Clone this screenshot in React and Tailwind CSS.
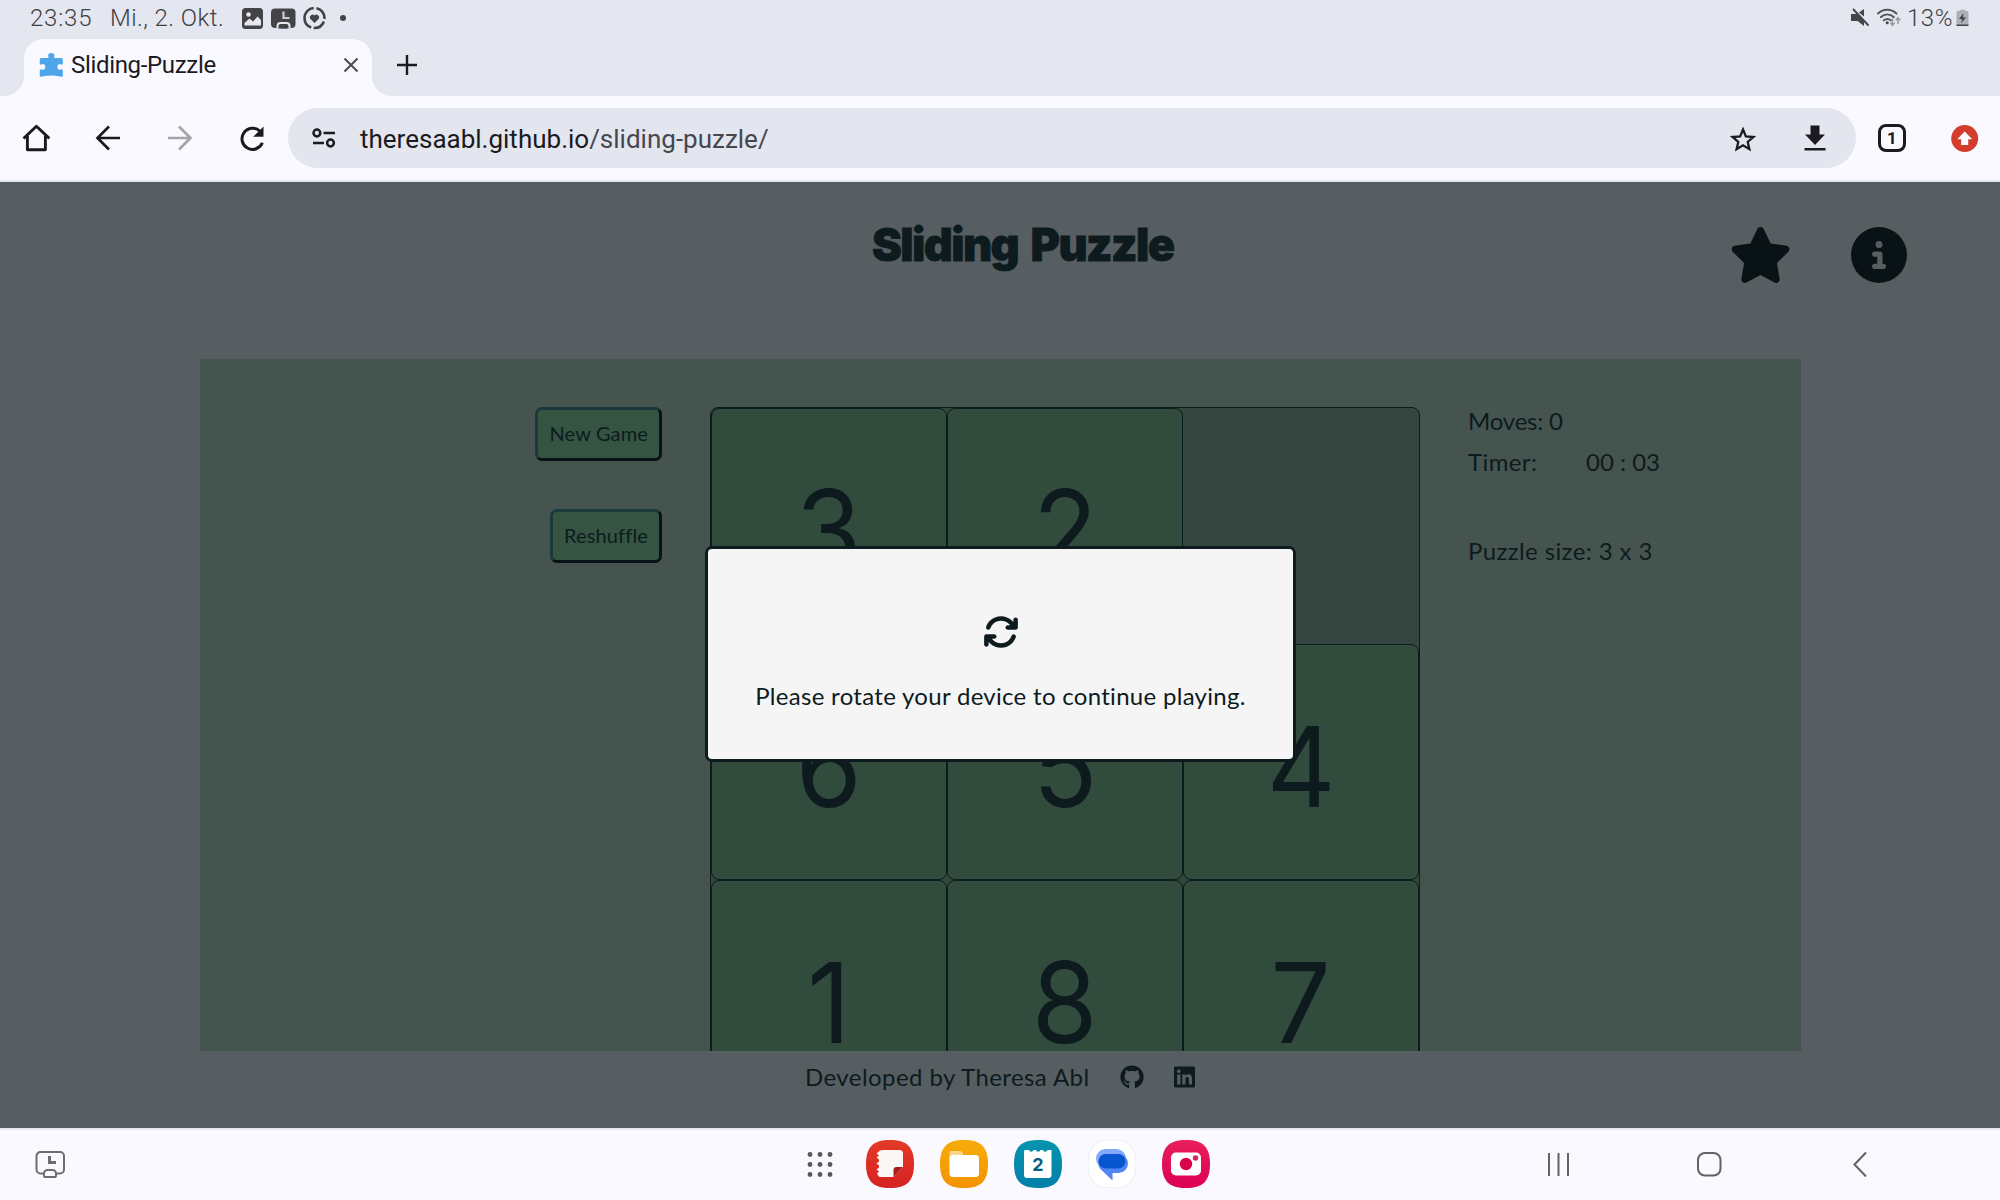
import { FaStar, FaCircleInfo, FaArrowsRotate, FaGithub, FaLinkedin } from "react-icons/fa6";

function StatusBar() {
  return (
    <div className="flex h-9 items-center pl-[30px] pr-[31px] text-[24px] leading-9 font-light text-[#3f3f42]">
      <span className="w-[80px] tracking-[0.8px]">23:35</span>
      <span className="w-[132px] whitespace-nowrap tracking-[0.45px]">Mi., 2. Okt.</span>
      <svg width="108" height="24" viewBox="242 6 108 24" fill="#444447">
        <rect x="242" y="8" width="21" height="21" rx="3.5" />
        <circle cx="248.500" cy="14.500" r="2.300" fill="#e4e7f0" />
        <path d="M244.500 25.500v-2.500l5-4.500 3.500 3 4.500-5 3.500 3.500v5.500z" fill="#e4e7f0" />
        <rect x="271" y="8.500" width="24.500" height="19.500" rx="4" />
        <path d="M283.500 11.500v6.500h6" fill="none" stroke="#c9ccd4" strokeWidth="2.200" />
        <path d="M277.500 28.500v-2.500a3 3 0 0 1 3-3h6a3 3 0 0 1 3 3v2.500" fill="#444447" stroke="#e4e7f0" strokeWidth="2" />
        <rect x="280" y="25" width="7.500" height="3.500" rx="1.500" />
        <circle cx="314.500" cy="18" r="10" fill="none" stroke="#444447" strokeWidth="2.600" strokeDasharray="15 2.500 13 2.500 27 2.830" strokeDashoffset="14" />
        <path d="M314.500 23l-4.300-4.300a2.700 2.700 0 0 1 4.300-3.200 2.700 2.700 0 0 1 4.300 3.200z" />
        <circle cx="343" cy="18" r="3" />
      </svg>
      <div className="ml-auto flex items-center">
        <svg width="56" height="24" viewBox="1850 6 56 24" fill="#454548">
          <path d="M1852 14h4.500l1.500-1.300 7 7v6.300l-6.500-5H1852z" />
          <path d="M1860 12.500l5-3.500v7.500z" />
          <path d="M1854.500 9.500l14.500 15.500" stroke="#454548" strokeWidth="1.900" strokeLinecap="round" />
          <g fill="none" stroke="#555558" strokeWidth="2" strokeLinecap="round">
            <path d="M1879 13.500c5.500-5 13-5 18.500 0" />
            <path d="M1881.800 17c4-3.500 9-3.500 13 0" />
            <path d="M1884.800 20.300c2.300-1.700 4.800-1.700 7 0" />
          </g>
          <circle cx="1888.200" cy="22.800" r="1.500" />
          <path d="M1893.500 18v7m-2.200-2.200 2.200 2.500 2.200-2.500M1899 24v-6m-2.200 2.200 2.200-2.500 2.200 2.500" fill="none" stroke="#9a9ba1" strokeWidth="1.500" />
        </svg>
        <span className="ml-[2px] w-[49px] tracking-[0.5px]">13%</span>
        <svg width="13" height="18" viewBox="0 0 13 18">
          <path d="M3.500 2V0.800h6V2h2q1 0 1 1v13h-12V3q0-1 1-1z" fill="#aeb0b8" />
          <path d="M0.500 15.500h12v1.500h-12z" fill="#444447" />
          <path d="M7.500 4 3 10h3l-.8 4L10 8.500H7z" fill="#444447" />
        </svg>
      </div>
    </div>
  );
}

function TabStrip() {
  return (
    <div className="flex h-[60px] items-end">
      <svg className="h-5 w-6" viewBox="0 0 24 20">
        <path d="M4 20a20 20 0 0 0 20-20v20z" fill="#faf9ff" />
      </svg>
      <div className="flex h-[57px] w-[348px] rounded-t-[20px] bg-[#faf9ff] pl-[15px]">
        <svg className="mt-[13px] h-[26px] w-[25px]" viewBox="0 0 25 26">
          <path
            d="M0.800 7.500Q0.800 6 2.300 6H9.300Q9.800 5 9.200 3.800Q9 1 12.300 1Q15.600 1 15.400 3.800Q14.800 5 15.300 6H22.300Q23.800 6 23.800 7.500V12.300Q23 13 21.500 12.200Q18.500 11.600 18.300 15Q18.500 18.200 21.500 17.700Q23 17 23.800 17.800V24.800Q18 24 16.500 23.800Q12.300 23.300 8 23.800Q5 24.400 0.800 24.800V17.800Q1.600 17 3.100 17.700Q6.100 18.200 6.300 15Q6.100 11.600 3.100 12.200Q1.600 13 0.800 12.300Z"
            fill="#4ea5e9"
          />
        </svg>
        <span className="ml-[7px] text-[24px] leading-[52px] tracking-[-0.33px] text-[#1b1b1f]">Sliding-Puzzle</span>
        <svg className="mr-[13px] mt-[18px] ml-auto h-4 w-4" viewBox="0 0 16 16">
          <path d="M1.500 1.500l13 13M14.500 1.500l-13 13" stroke="#4a4a50" strokeWidth="2" />
        </svg>
      </div>
      <svg className="h-5 w-6" viewBox="0 0 24 20">
        <path d="M20 20A20 20 0 0 1 0 0v20z" fill="#faf9ff" />
      </svg>
      <svg className="mb-[21px] ml-px h-5 w-5" viewBox="0 0 20 20">
        <path d="M10 0v20M0 10h20" stroke="#1b1b1f" strokeWidth="2.400" />
      </svg>
    </div>
  );
}

function Toolbar() {
  return (
    <div className="flex h-[84px] items-center bg-[#faf9ff]">
      <svg className="ml-[22px] h-7 w-7" viewBox="0 0 28 28" fill="none" stroke="#1b1b1f" strokeWidth="2.900">
        <path d="M1.500 14.500 14.400 2.300l13 12.200" strokeLinejoin="round" />
        <path d="M5.400 11.500v14.300h18V11.500" strokeLinejoin="round" />
      </svg>
      <svg className="ml-[45px] h-[26px] w-[26px]" viewBox="0 0 26 26" fill="none" stroke="#1b1b1f" strokeWidth="2.700">
        <path d="M25 13H3M14 1.500 2.500 13 14 24.500" />
      </svg>
      <svg className="ml-[46px] h-[26px] w-[26px]" viewBox="0 0 26 26" fill="none" stroke="#a3a3a9" strokeWidth="2.700">
        <path d="M1 13h22M12 1.500 23.500 13 12 24.500" />
      </svg>
      <svg className="ml-[46px] h-[26px] w-[26px]" viewBox="0 0 26 26">
        <path d="M23.400 17.800A10.600 10.600 0 1 1 20.800 6" fill="none" stroke="#1b1b1f" strokeWidth="3" />
        <path d="M24.500 1.500v10.300H14.200z" fill="#1b1b1f" />
      </svg>
      <div className="ml-[23px] flex h-[60px] w-[1568px] items-center rounded-full bg-[#e3e6ef] pl-[24px] pr-[30px]">
        <svg className="h-5 w-6" viewBox="0 0 24 20" fill="none" stroke="#1b1b1f" strokeWidth="2.500">
          <circle cx="4.900" cy="5" r="3.400" />
          <circle cx="18.500" cy="15" r="3.400" />
          <path d="M11.500 5H23M1 15h11" />
        </svg>
        <span className="ml-[24px] pt-[2px] text-[26px] text-[#1b1b1f]">
          theresaabl.github.io<span className="text-[#46474f]">/sliding-puzzle/</span>
        </span>
        <svg className="mt-[2px] ml-auto h-[26px] w-[26px]" viewBox="0 0 26 26">
          <path d="M13 3.500l2.900 6.900 7.500.6-5.700 4.900 1.700 7.300-6.400-3.900-6.400 3.900 1.700-7.300L2.600 11l7.500-.6z" fill="none" stroke="#1b1b1f" strokeWidth="2.300" />
        </svg>
        <svg className="ml-[48px] h-[26px] w-[22px]" viewBox="0 0 22 26" fill="#1b1b1f">
          <path d="M6.500 0.500h9v9H21L11 20 1 9.500h5.500zM.5 23h21v2.600H.5z" />
        </svg>
      </div>
      <div className="ml-[22px] flex h-7 w-7 items-center justify-center rounded-[8px] border-[3px] border-[#1b1b1f] text-[17px] leading-none font-bold text-[#1b1b1f]">
        1
      </div>
      <svg className="ml-[45px] h-7 w-7" viewBox="0 0 28 28">
        <circle cx="13.700" cy="14.500" r="13.500" fill="#d23d2d" />
        <path d="M13.700 7.500 21.200 15.200h-4V21h-7v-5.800h-4z" fill="#fff" />
      </svg>
    </div>
  );
}

function Header() {
  return (
    <header className="flex h-[177px] items-start pl-[872px] pr-[93px]">
      <h1 className="mt-[35px] font-[Inter] text-[45px] leading-[56px] font-black tracking-[-1.6px] whitespace-nowrap text-[#0d1b1e] [word-spacing:5px] [-webkit-text-stroke:0.8px_#0d1b1e]">
        Sliding Puzzle
      </h1>
      <FaStar className="mt-[45px] ml-auto h-14 w-[63px] text-[#091214]" />
      <FaCircleInfo className="mt-[45px] ml-[59px] h-14 w-14 text-[#091214]" />
    </header>
  );
}

function GameButton({ children }) {
  return (
    <button className="h-[54px] rounded-[7px] border-3 border-t-[#1b383c] border-r-[#091214] border-b-[#091214] border-l-[#1b383c] bg-[#355441] px-[11px] pb-[2px] text-[20px] tracking-[0.15px] text-[#0d1b1e]">
      {children}
    </button>
  );
}

const tiles = ["3", "2", null, "6", "5", "4", "1", "8", "7"];

function Board() {
  return (
    <div className="ml-12 grid h-[710px] w-[710px] shrink-0 grid-cols-3 grid-rows-3 rounded-[8px] border border-[#0d1b1e] bg-[#34463f]">
      {tiles.map((n, i) =>
        n ? (
          <div key={i} className="flex items-center justify-center rounded-[8px] border border-[#0d1b1e] bg-[#314c3d] pt-[7px] font-[Inter] text-[112px] leading-none text-[#0d1b1e]">
            <span className="scale-x-[0.95]">{n}</span>
          </div>
        ) : (
          <div key={i} />
        ),
      )}
    </div>
  );
}

function Game() {
  return (
    <main className="mr-[199px] ml-[200px] flex h-[692px] items-start overflow-hidden bg-[#45544e] pt-12">
      <div className="flex w-[462px] flex-col items-end gap-12">
        <GameButton>New Game</GameButton>
        <GameButton>Reshuffle</GameButton>
      </div>
      <Board />
      <div className="ml-[48px] text-[24px] leading-7 text-[#0d1b1e]">
        <p className="tracking-[-0.2px]">Moves: 0</p>
        <p className="mt-[13px] flex">
          <span className="w-[118px] tracking-[0.4px]">Timer:</span>
          <span>00 : 03</span>
        </p>
        <p className="mt-[61px] tracking-[0.4px]">Puzzle size: 3 x 3</p>
      </div>
    </main>
  );
}

function Footer() {
  return (
    <footer className="flex h-[77px] items-start pl-[805px] text-[24px] leading-7 text-[#0d1b1e]">
      <span className="mt-[12px] w-[315px] tracking-[0.42px]">Developed by Theresa Abl</span>
      <FaGithub className="mt-[14px] h-6 w-6" />
      <FaLinkedin className="mt-[14px] ml-[30px] h-6 w-[21px]" />
    </footer>
  );
}

function RotateDialog() {
  return (
    <div className="absolute top-[364px] left-[705px] flex h-[216px] w-[591px] flex-col items-center rounded-[7px] border-3 border-[#0d1b1e] bg-[#f5f5f5] text-[#0d1b1e]">
      <FaArrowsRotate className="mt-[65px] h-9 w-9" />
      <p className="mt-[32px] text-[24px] leading-7 tracking-[0.3px] whitespace-nowrap">Please rotate your device to continue playing.</p>
    </div>
  );
}

const squircle = "M24 0C41 0 48 7 48 24S41 48 24 48 0 41 0 24 7 0 24 0z";

function AppIcon({ id, from, to, children }) {
  return (
    <svg className="h-12 w-12" viewBox="0 0 48 48">
      <defs>
        <linearGradient id={id} x1="0" y1="0" x2="0" y2="1">
          <stop offset="0" stopColor={from} />
          <stop offset="1" stopColor={to} />
        </linearGradient>
      </defs>
      <path d={squircle} fill={`url(#${id})`} />
      {children}
    </svg>
  );
}

function NavBar() {
  return (
    <nav className="flex h-[70px] items-start bg-[#faf9ff]">
      <svg className="mt-[20px] ml-[34px] h-[30px] w-[32px]" viewBox="0 0 32 30" fill="none" stroke="#6d6d70" strokeWidth="2">
        <path d="M9 23.500H6.500a4 4 0 0 1-4-4V6a4 4 0 0 1 4-4H26a4 4 0 0 1 4 4v13.500a4 4 0 0 1-4 4h-3.500" />
        <path d="M15.500 6v6.500H22" strokeWidth="3" />
        <path d="M10 26v-2.500a3.500 3.500 0 0 1 3.500-3.500H18.500a3.500 3.500 0 0 1 3.500 3.500V26q0 1-1 1H11q-1 0-1-1z" />
      </svg>
      <svg className="mt-[21px] ml-[740px] h-7 w-7" viewBox="0 0 28 28" fill="#58585b">
        {[4, 14, 24].map((y) => [4, 14, 24].map((x) => <circle key={`${x}-${y}`} cx={x} cy={y - 0.5} r="2.400" />))}
      </svg>
      <div className="mt-[10px] ml-[32px] flex gap-[26px]">
        <AppIcon id="notes" from="#e43a27" to="#d62222">
          <path d="M17 10H33.500Q37 10 37 13.500V27L27.500 37H14.500Q12 37 12 35L11 33.500 13 31.500 10.500 29.500 13 27.500V25.500L10.500 23.500 13 21.500V19.500L10.500 17.500 13 15.500 10.500 13.500 13 11.500Q13.500 10 17 10z" fill="#fbf7f6" />
          <path d="M27.500 37V30Q27.500 27 30.500 27H37z" fill="#a51f1d" />
        </AppIcon>
        <AppIcon id="files" from="#f6ac0b" to="#f59300">
          <path d="M9.500 13Q9.500 11 11.500 11H20Q22 11 23 13V15H36V20H9.500z" fill="#fcd68b" />
          <path d="M23 10H37V14.500H23z" fill="#f6a80a" />
          <rect x="9.500" y="15" width="29.500" height="22" rx="3.500" fill="#fff" />
        </AppIcon>
        <AppIcon id="calendar" from="#0594ae" to="#037fa9">
          <path d="M10.500 10H15A2.300 2.300 0 0 0 19.500 10H22A2.300 2.300 0 0 0 26.500 10H29A2.300 2.300 0 0 0 33.500 10H37.500V35Q37.500 38 34.500 38H13Q10 38 10 35V12z" fill="#fff" />
          <text x="24" y="30.500" textAnchor="middle" fontSize="18" fontWeight="700" fontFamily="Inter, sans-serif" fill="#0b5d7e">2</text>
        </AppIcon>
        <AppIcon id="messages" from="#ffffff" to="#ffffff">
          <path d={squircle} fill="none" stroke="#ececf0" strokeWidth="1" />
          <rect x="8" y="9" width="30" height="19.500" rx="9.700" fill="#84a9fa" />
          <path d="M19.500 14H30.500A9.500 9.500 0 0 1 30.500 33H24.500V40.500L15 31.500A9.500 9.500 0 0 1 19.500 14z" fill="#5286f3" />
          <rect x="10.500" y="14" width="27" height="14.500" rx="7.200" fill="#0856cf" />
        </AppIcon>
        <AppIcon id="camera" from="#e91f5b" to="#dc0055">
          <rect x="9" y="12.500" width="30" height="23" rx="5" fill="#fff" />
          <circle cx="24" cy="24" r="6.200" fill="#d8044f" />
          <circle cx="33.500" cy="18" r="2.700" fill="#e01d56" />
        </AppIcon>
      </div>
      <svg className="mt-[22px] ml-[337px] h-6 w-[24px]" viewBox="0 0 24 24" stroke="#626265" strokeWidth="2">
        <path d="M2 1v23M11.500 1v23M21 1v23" />
      </svg>
      <svg className="mt-[21px] ml-[125px] h-[26px] w-[26px]" viewBox="0 0 26 26" fill="none" stroke="#626265" strokeWidth="2">
        <rect x="2" y="2" width="22.500" height="22.500" rx="7" />
      </svg>
      <svg className="mt-[21px] ml-[130px] h-[26px] w-4" viewBox="0 0 16 26" fill="none" stroke="#626265" strokeWidth="2">
        <path d="M14 1.500 2.500 13.500 14 25.500" />
      </svg>
    </nav>
  );
}

export default function App() {
  return (
    <div className="flex h-[1200px] w-[2000px] flex-col overflow-hidden bg-[#e4e7f0] font-[Roboto]">
      <StatusBar />
      <TabStrip />
      <Toolbar />
      <div className="relative mt-[2px] h-[946px] bg-[#565e61] font-[Lato]">
        <Header />
        <Game />
        <Footer />
        <RotateDialog />
      </div>
      <div className="h-[2px]" />
      <NavBar />
    </div>
  );
}
